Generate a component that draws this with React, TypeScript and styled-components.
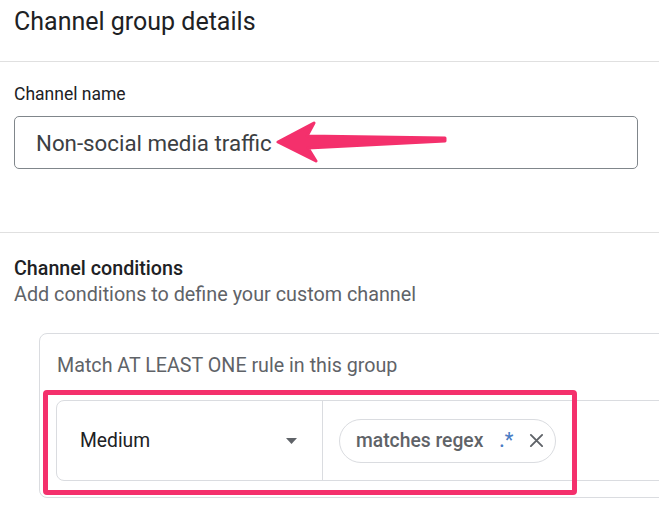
import styled, { createGlobalStyle } from "styled-components";

const GlobalStyle = createGlobalStyle`
  html, body {
    margin: 0;
    padding: 0;
    background: #fff;
    overflow: hidden;
  }
  body {
    font-family: Roboto, "Noto Sans", Arial, sans-serif;
    color: #202124;
  }
`;

const PINK = "#f4306c";

function App() {
  return (
    <>
      <GlobalStyle />
      <Page>
        <Header>
          <Title>Channel group details</Title>
        </Header>

        <Section pad={22} height={171}>
          <Label>Channel name</Label>
          <InputWrap>
            <NameInput>Non-social media traffic</NameInput>
            <Arrow width="172" height="46" viewBox="0 0 172 46">
              <polygon
                points="2,22 38,3 31,16 169,18 169,21 32,28 40,41"
                fill={PINK}
                stroke={PINK}
                strokeWidth="3"
                strokeLinejoin="round"
              />
            </Arrow>
          </InputWrap>
        </Section>

        <Section pad={24}>
          <Heading>Channel conditions</Heading>
          <SubText>Add conditions to define your custom channel</SubText>

          <Card>
            <MatchText>Match AT LEAST ONE rule in this group</MatchText>
            <RuleRow>
              <DimensionCell>
                <DimensionName>Medium</DimensionName>
                <svg width="11" height="6" viewBox="0 0 11 6">
                  <polygon points="0,0 11,0 5.5,6" fill="#5f6368" />
                </svg>
              </DimensionCell>
              <ValueCell>
                <Chip>
                  <ChipText>matches regex</ChipText>
                  <ChipValue>.*</ChipValue>
                  <svg width="15" height="15" viewBox="0 0 16 16">
                    <path
                      d="M2 2 L14 14 M14 2 L2 14"
                      stroke="#5f6368"
                      strokeWidth="2"
                      strokeLinecap="round"
                    />
                  </svg>
                </Chip>
              </ValueCell>
              <Highlight />
            </RuleRow>
          </Card>
        </Section>
      </Page>
    </>
  );
}

export default App;

const Page = styled.div`
  width: 659px;
  height: 516px;
  overflow: hidden;
`;

const Header = styled.div`
  height: 62px;
  box-sizing: border-box;
  padding: 7px 14px 0;
  border-bottom: 1px solid #e0e0e0;
`;

const Title = styled.div`
  font-size: 25px;
  line-height: 30px;
  color: #202124;
`;

const Section = styled.div<{ pad: number; height?: number }>`
  padding: ${({ pad }) => pad}px 14px 0;
  box-sizing: border-box;
  ${({ height }) =>
    height ? `height: ${height}px; border-bottom: 1px solid #e0e0e0;` : ""}
`;

const Label = styled.div`
  font-size: 17.5px;
  line-height: 20px;
  color: #202124;
`;

const InputWrap = styled.div`
  position: relative;
  margin-top: 12px;
  width: 624px;
`;

const NameInput = styled.div`
  height: 53px;
  box-sizing: border-box;
  border: 1px solid #80868b;
  border-radius: 5px;
  padding-left: 21px;
  display: flex;
  align-items: center;
  font-size: 22.3px;
  color: #3c4043;
`;

const Arrow = styled.svg`
  position: absolute;
  left: 262px;
  top: 4px;
`;

const Heading = styled.div`
  font-size: 19.7px;
  font-weight: 500;
  line-height: 24px;
  color: #202124;
`;

const SubText = styled.div`
  margin-top: 1px;
  font-size: 19.8px;
  line-height: 26px;
  color: #5f6368;
`;

const Card = styled.div`
  margin-top: 25px;
  margin-left: 25px;
  width: 720px;
  box-sizing: border-box;
  border: 1px solid #dadce0;
  border-radius: 8px;
  padding: 20px 17px 16px 16px;
`;

const MatchText = styled.div`
  font-size: 19.7px;
  line-height: 24px;
  color: #5f6368;
  padding-left: 1px;
`;

const RuleRow = styled.div`
  position: relative;
  margin-top: 22px;
  height: 81px;
  box-sizing: border-box;
  display: flex;
  border: 1px solid #dadce0;
  border-radius: 8px;
`;

const DimensionCell = styled.div`
  width: 266px;
  box-sizing: border-box;
  display: flex;
  align-items: center;
  justify-content: space-between;
  padding: 0 25px 0 23px;
  border-right: 1px solid #dadce0;
`;

const DimensionName = styled.span`
  font-size: 19.3px;
  color: #202124;
`;

const ValueCell = styled.div`
  display: flex;
  align-items: center;
  padding-left: 16px;
`;

const Chip = styled.div`
  height: 44px;
  box-sizing: border-box;
  display: flex;
  align-items: center;
  border: 1px solid #dadce0;
  border-radius: 22px;
  padding: 0 11px 0 16px;
`;

const ChipText = styled.span`
  font-size: 19.3px;
  font-weight: 500;
  color: #5f6368;
`;

const ChipValue = styled.span`
  margin: 0 16px 0 16px;
  font-size: 19.3px;
  font-weight: 500;
  color: #4a7cc4;
`;

const Highlight = styled.div`
  position: absolute;
  left: -14px;
  top: -11px;
  width: 534px;
  height: 105px;
  box-sizing: border-box;
  border: 5px solid ${PINK};
  border-radius: 4px;
  pointer-events: none;
`;
